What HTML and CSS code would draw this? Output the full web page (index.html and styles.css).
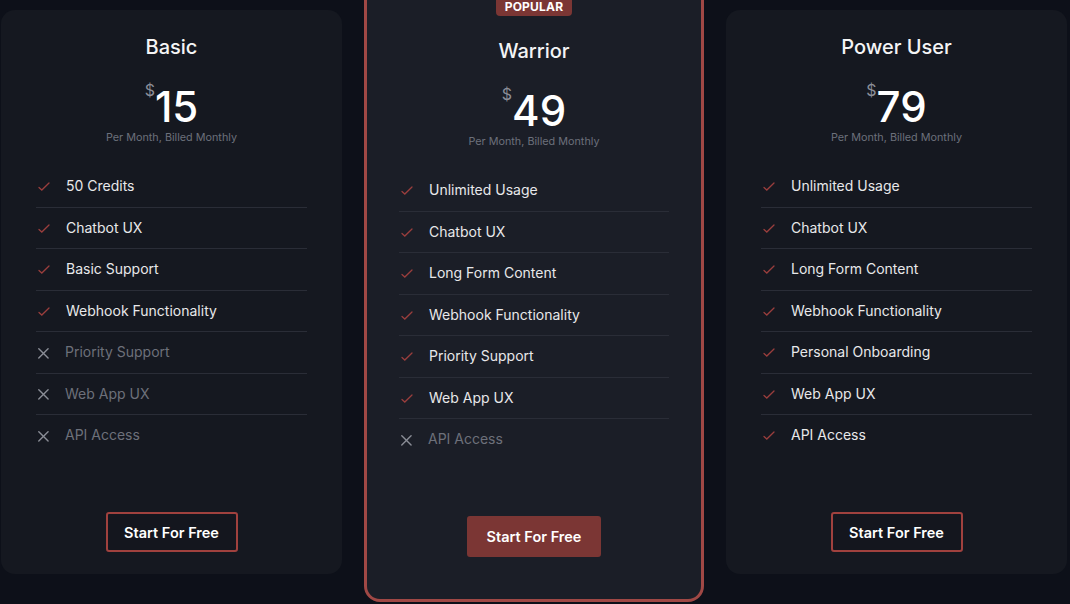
FILE: index.html
```html
<!DOCTYPE html>
<html lang="en">
<head>
    <meta charset="UTF-8">
    <meta name="viewport" content="width=device-width, initial-scale=1.0">
    <title>Pricing</title>
    <link rel="stylesheet" href="styles.css">
</head>
<body>
    <div class="plans">
        <div class="card">
            <h2 class="name">Basic</h2>
            <div class="price"><span class="cur">$</span><span class="num">15</span></div>
            <p class="per">Per Month, Billed Monthly</p>
            <ul class="feats">
                <li class="yes"><svg viewBox="0 0 14 14"><path d="M3 8.5 L5.8 11 L13 4"/></svg>50 Credits</li>
                <li class="yes"><svg viewBox="0 0 14 14"><path d="M3 8.5 L5.8 11 L13 4"/></svg>Chatbot UX</li>
                <li class="yes"><svg viewBox="0 0 14 14"><path d="M3 8.5 L5.8 11 L13 4"/></svg>Basic Support</li>
                <li class="yes"><svg viewBox="0 0 14 14"><path d="M3 8.5 L5.8 11 L13 4"/></svg>Webhook Functionality</li>
                <li class="no"><svg viewBox="0 0 14 14"><path d="M3 3 L13 13 M13 3 L3 13"/></svg>Priority Support</li>
                <li class="no"><svg viewBox="0 0 14 14"><path d="M3 3 L13 13 M13 3 L3 13"/></svg>Web App UX</li>
                <li class="no"><svg viewBox="0 0 14 14"><path d="M3 3 L13 13 M13 3 L3 13"/></svg>API Access</li>
            </ul>
            <button class="btn">Start For Free</button>
        </div>

        <div class="card hot">
            <span class="badge">Popular</span>
            <h2 class="name">Warrior</h2>
            <div class="price"><span class="cur">$</span><span class="num">49</span></div>
            <p class="per">Per Month, Billed Monthly</p>
            <ul class="feats">
                <li class="yes"><svg viewBox="0 0 14 14"><path d="M3 8.5 L5.8 11 L13 4"/></svg>Unlimited Usage</li>
                <li class="yes"><svg viewBox="0 0 14 14"><path d="M3 8.5 L5.8 11 L13 4"/></svg>Chatbot UX</li>
                <li class="yes"><svg viewBox="0 0 14 14"><path d="M3 8.5 L5.8 11 L13 4"/></svg>Long Form Content</li>
                <li class="yes"><svg viewBox="0 0 14 14"><path d="M3 8.5 L5.8 11 L13 4"/></svg>Webhook Functionality</li>
                <li class="yes"><svg viewBox="0 0 14 14"><path d="M3 8.5 L5.8 11 L13 4"/></svg>Priority Support</li>
                <li class="yes"><svg viewBox="0 0 14 14"><path d="M3 8.5 L5.8 11 L13 4"/></svg>Web App UX</li>
                <li class="no"><svg viewBox="0 0 14 14"><path d="M3 3 L13 13 M13 3 L3 13"/></svg>API Access</li>
            </ul>
            <button class="btn fill">Start For Free</button>
        </div>

        <div class="card">
            <h2 class="name">Power User</h2>
            <div class="price"><span class="cur">$</span><span class="num">79</span></div>
            <p class="per">Per Month, Billed Monthly</p>
            <ul class="feats">
                <li class="yes"><svg viewBox="0 0 14 14"><path d="M3 8.5 L5.8 11 L13 4"/></svg>Unlimited Usage</li>
                <li class="yes"><svg viewBox="0 0 14 14"><path d="M3 8.5 L5.8 11 L13 4"/></svg>Chatbot UX</li>
                <li class="yes"><svg viewBox="0 0 14 14"><path d="M3 8.5 L5.8 11 L13 4"/></svg>Long Form Content</li>
                <li class="yes"><svg viewBox="0 0 14 14"><path d="M3 8.5 L5.8 11 L13 4"/></svg>Webhook Functionality</li>
                <li class="yes"><svg viewBox="0 0 14 14"><path d="M3 8.5 L5.8 11 L13 4"/></svg>Personal Onboarding</li>
                <li class="yes"><svg viewBox="0 0 14 14"><path d="M3 8.5 L5.8 11 L13 4"/></svg>Web App UX</li>
                <li class="yes"><svg viewBox="0 0 14 14"><path d="M3 8.5 L5.8 11 L13 4"/></svg>API Access</li>
            </ul>
            <button class="btn">Start For Free</button>
        </div>
    </div>
</body>
</html>
```

FILE: styles.css
```css
* {
    margin: 0;
    padding: 0;
    box-sizing: border-box;
}
ul {
    list-style: none;
}
body {
    height: 604px;
    overflow: hidden;
    background-color: #0d1019;
    font-family: Inter, "Noto Sans", sans-serif;
    color: #ececee;
}
.plans {
    display: flex;
    align-items: flex-start;
    gap: 22px;
    padding: 10px 0 0 1px;
}
.card {
    display: flex;
    flex-direction: column;
    align-items: center;
    width: 341px;
    height: 564px;
    padding: 23px 35px 22px;
    border-radius: 14px;
    background-color: #151820;
}
.hot {
    width: 340px;
    height: 625px;
    margin-top: -33px;
    padding: 15px 32px 42px;
    border: 3px solid #a04845;
    border-radius: 16px;
    background-color: #1b1e27;
}
.badge {
    height: 21px;
    margin-bottom: 21px;
    padding: 1px 9px 0;
    border-radius: 4px;
    background-color: #7b3634;
    font-size: 12px;
    font-weight: 700;
    line-height: 21px;
    letter-spacing: 0.2px;
    text-transform: uppercase;
    color: #fff;
}
.name {
    font-size: 20px;
    font-weight: 500;
    line-height: 28px;
    color: #f4f4f5;
}
.price {
    display: flex;
    align-items: flex-start;
    margin-top: 25px;
}
.cur {
    margin-top: -4px;
    font-size: 16px;
    line-height: 16px;
    color: #8b8e98;
}
.num {
    font-size: 42px;
    font-weight: 500;
    line-height: 42px;
    color: #fff;
}
.per {
    margin-top: 3px;
    font-size: 10.8px;
    line-height: 14px;
    color: #6c707b;
}
.feats {
    width: 100%;
    margin-top: 21px;
}
.feats li {
    display: flex;
    align-items: center;
    gap: 16px;
    padding: 12px 0;
    border-bottom: 1px solid #2a2d37;
    font-size: 14px;
    line-height: 16.5px;
    color: #e8e8ea;
}
.feats li:last-child {
    border-bottom: none;
}
.feats svg {
    width: 14px;
    height: 14px;
    fill: none;
    stroke-width: 1.3;
    stroke-linecap: round;
}
.yes svg {
    stroke: #9a3e3d;
}
.feats .no {
    color: #6d707a;
}
.no svg {
    width: 13px;
    height: 13px;
    stroke: #8a8d96;
    stroke-width: 1.5;
}
.btn {
    width: 132px;
    height: 40px;
    margin-top: auto;
    border: 2px solid #a0413e;
    border-radius: 3px;
    background-color: #14161e;
    font-family: Inter, "Noto Sans", sans-serif;
    font-size: 14.5px;
    font-weight: 600;
    color: #fff;
}
.fill {
    width: 134px;
    height: 41px;
    border-color: #7b3634;
    background-color: #7b3634;
}
```
